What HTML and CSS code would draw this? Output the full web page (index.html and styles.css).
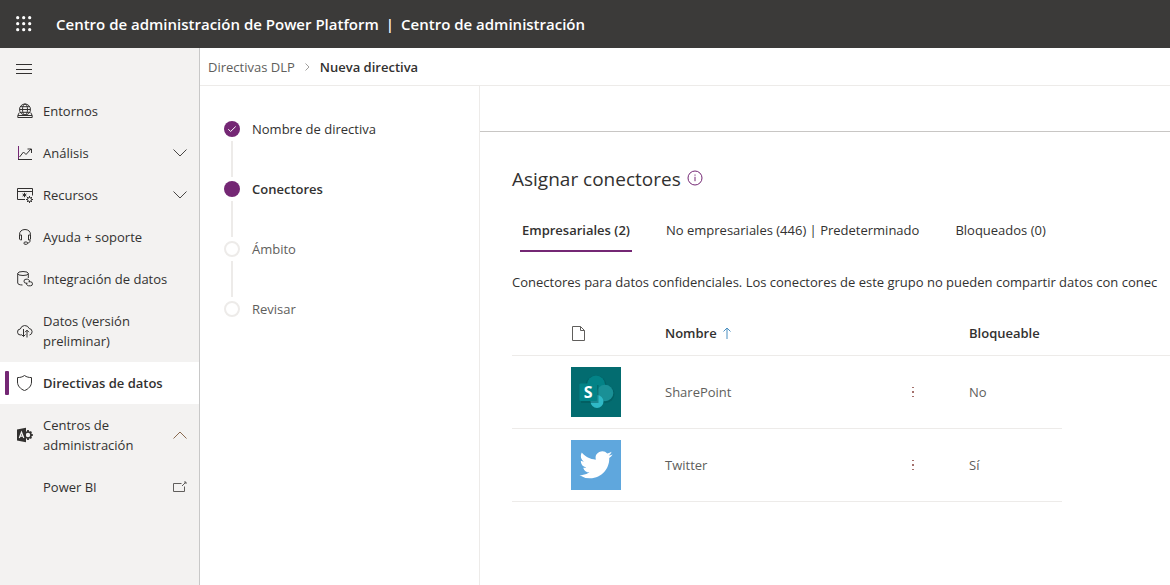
FILE: index.html
```html
<!DOCTYPE html>
<html lang="es">
<head>
<meta charset="utf-8">
<meta name="viewport" content="width=device-width, initial-scale=1">
<title>Centro de administración de Power Platform</title>
<link rel="stylesheet" href="styles.css">
</head>
<body>
<div class="app">
  <header class="topbar">
    <button class="icon-button waffle" type="button" aria-label="Iniciador de aplicaciones">
      <svg width="16" height="16" viewBox="0 0 16 16" fill="currentColor"><circle cx="1.7" cy="1.7" r="1.6"/><circle cx="7.7" cy="1.7" r="1.6"/><circle cx="13.7" cy="1.7" r="1.6"/><circle cx="1.7" cy="7.7" r="1.6"/><circle cx="7.7" cy="7.7" r="1.6"/><circle cx="13.7" cy="7.7" r="1.6"/><circle cx="1.7" cy="13.7" r="1.6"/><circle cx="7.7" cy="13.7" r="1.6"/><circle cx="13.7" cy="13.7" r="1.6"/></svg>
    </button>
    <span class="brand">Centro de administración de Power Platform</span>
    <span class="brand-divider">|</span>
    <span class="brand">Centro de administración</span>
  </header>

  <div class="body">
    <nav class="sidebar" aria-label="Principal">
      <button class="icon-button menu" type="button" aria-label="Contraer menú">
        <svg width="16" height="10" viewBox="0 0 16 10" stroke="currentColor"><path d="M0 .5h16M0 5.500h16M0 9.500h16"/></svg>
      </button>
      <a class="nav-item" href="#entornos">
        <svg class="nav-icon" viewBox="0 0 16 16"><circle cx="8" cy="6.500" r="5.500"/><ellipse cx="8" cy="6.500" rx="2.500" ry="5.500"/><path d="M2.500 6.500h11M3.400 3.700h9.200M3.400 9.300h9.200M2.300 9.500L.8 12.500v2h14.400v-2l-1.500-3M1 12.500h14"/></svg>
        <span class="nav-label">Entornos</span>
      </a>
      <a class="nav-item" href="#analisis">
        <svg class="nav-icon" viewBox="0 0 16 16"><path class="accent" d="M1.500 1v13.500"/><path d="M1 14.500H15M2.500 12l4-5 2.500 2.500 5-5.500M10.500 4H14.500v4"/></svg>
        <span class="nav-label">Análisis</span>
        <svg class="chevron" viewBox="0 0 14 8"><path d="M.5.500L7 7 13.500.5"/></svg>
      </a>
      <a class="nav-item" href="#recursos">
        <svg class="nav-icon" viewBox="0 0 16 16"><path d="M8 12.500H.5v-11h15v7M.5 4.500h15"/><path d="M7.500 5.800v4.400M5.600 6.900l3.800 2.200M9.400 6.900L5.600 9.100"/><circle cx="12.500" cy="12.500" r="2"/><path d="M12.500 9v1.500M12.500 14.500V16M9 12.500h1.500M14.500 12.500H16M10 10l1 1M14 14l1 1M15 10l-1 1M11 14l-1 1"/></svg>
        <span class="nav-label">Recursos</span>
        <svg class="chevron" viewBox="0 0 14 8"><path d="M.5.500L7 7 13.500.5"/></svg>
      </a>
      <a class="nav-item" href="#ayuda">
        <svg class="nav-icon" viewBox="0 0 16 16"><path d="M2.500 6V5.500C2.500 2.500 4.700.5 8 .5s5.500 2 5.500 5V6M2.500 6h2v5h-1l-1-1zM13.500 6h-2v5h1l1-1zM13 11v1c0 1.200-1 2-2.500 2"/><rect x="7" y="13" width="3.500" height="2.300" rx="1"/></svg>
        <span class="nav-label">Ayuda + soporte</span>
      </a>
      <a class="nav-item" href="#integracion">
        <svg class="nav-icon" viewBox="0 0 16 16"><ellipse cx="6" cy="2.500" rx="5.300" ry="2"/><path d="M.7 2.500v9.500c0 1.200 2 2 4.800 2M11.300 2.500V7"/><path d="M10.500 12.200H9a2 2 0 1 1 0-4h1.500a2 2 0 0 1 1.800 2.800M11.500 10.800h2a2 2 0 1 1 0 4h-2a2 2 0 0 1-1.800-2.700"/></svg>
        <span class="nav-label">Integración de datos</span>
      </a>
      <a class="nav-item" href="#datos">
        <svg class="nav-icon" viewBox="0 0 16 16"><path d="M4.500 12H3.700a3 3 0 0 1-.4-6A4.700 4.700 0 0 1 12.200 5.500 3.300 3.300 0 0 1 12.500 12M6.500 6v7.500M4.500 11.500l2 2 2-2M10 14.500V7.200M8 9.200l2-2 2 2"/></svg>
        <span class="nav-label">Datos (versión preliminar)</span>
      </a>
      <a class="nav-item selected" href="#directivas" aria-current="page">
        <svg class="nav-icon" viewBox="0 0 16 16"><path d="M7.500.5C5.500 2 3 2.600.5 2.600V7c0 4 3 7 7 8.600 4-1.600 7-4.600 7-8.600V2.600C12 2.600 9.500 2 7.500.5z"/></svg>
        <span class="nav-label">Directivas de datos</span>
      </a>
      <a class="nav-item" href="#centros">
        <svg class="nav-icon" viewBox="0 0 16 16"><circle cx="11" cy="8" r="3" stroke-width="1.600"/><path d="M11 3v2M11 11v2M14 8h1.800M13.100 5.900l1.300-1.300M13.100 10.100l1.300 1.300" stroke-width="1.800"/><path class="solid" d="M0 2.500L9 .8v14.400L0 13.500z"/><path class="cutout" d="M2.300 11L4.500 5.200 6.800 11M3.200 9.200h2.700"/></svg>
        <span class="nav-label">Centros de administración</span>
        <svg class="chevron open" viewBox="0 0 14 8"><path d="M.5 7.500L7 1l6.500 6.500"/></svg>
      </a>
      <a class="nav-item nested" href="#powerbi">
        <span class="nav-label">Power BI</span>
        <svg class="external" viewBox="0 0 14 12"><path d="M8.500 2.500h-8v8h11V5.500M9 5L12.800 1.200M11 1h2v2"/></svg>
      </a>
    </nav>

    <main class="main">
      <nav class="breadcrumb" aria-label="Ruta">
        <a class="crumb" href="#dlp">Directivas DLP</a>
        <svg class="crumb-arrow" viewBox="0 0 5 8"><path d="M.5.500L4 4 .5 7.500"/></svg>
        <span class="crumb-current" aria-current="page">Nueva directiva</span>
      </nav>
      <div class="workspace">
        <ol class="steps">
          <li class="step"><span class="dot done"><svg width="16" height="16" viewBox="0 0 16 16"><path d="M4.300 8.200l2.300 2.300 5.100-5"/></svg></span><span>Nombre de directiva</span></li>
          <li class="step current" aria-current="step"><span class="dot done"></span><span>Conectores</span></li>
          <li class="step pending"><span class="dot"></span><span>Ámbito</span></li>
          <li class="step pending"><span class="dot"></span><span>Revisar</span></li>
        </ol>
        <section class="panel">
          <div class="commands"></div>
          <div class="content">
            <div class="heading">
              <h1>Asignar conectores</h1>
              <button class="icon-button info" type="button" aria-label="Información">
                <svg width="16" height="16" viewBox="0 0 16 16" fill="none" stroke="currentColor"><circle cx="8" cy="8" r="7"/><path d="M8 6.800v4.400M8 4.500v1.200"/></svg>
              </button>
            </div>
            <div class="tabs" role="tablist">
              <button class="tab active" type="button" role="tab" aria-selected="true">Empresariales (2)</button>
              <button class="tab" type="button" role="tab" aria-selected="false">No empresariales (446) | Predeterminado</button>
              <button class="tab" type="button" role="tab" aria-selected="false">Bloqueados (0)</button>
            </div>
            <p class="description">Conectores para datos confidenciales. Los conectores de este grupo no pueden compartir datos con conec</p>
            <table class="connectors">
              <colgroup><col class="col-check"><col class="col-icon"><col class="col-name"><col class="col-more"><col class="col-block"><col></colgroup>
              <thead>
                <tr>
                  <th></th>
                  <th><svg class="file" viewBox="0 0 13 15"><path d="M.5.500h8l4 4v10H.500zM8.500.500v4h4"/></svg></th>
                  <th><span class="sort">Nombre <svg viewBox="0 0 8 12"><path d="M4 12V1M.5 4.500L4 1l3.500 3.500"/></svg></span></th>
                  <th></th>
                  <th>Bloqueable</th>
                  <th></th>
                </tr>
              </thead>
              <tbody>
                <tr>
                  <td></td>
                  <td>
                    <svg class="logo" viewBox="0 0 50 50">
                      <rect width="50" height="50" fill="#036c70"/>
                      <circle cx="25" cy="19" r="10.500" fill="#024f52" opacity=".35"/>
                      <circle cx="25" cy="17.500" r="9" fill="#038387"/>
                      <circle cx="34.500" cy="27" r="9" fill="#024f52" opacity=".4"/>
                      <circle cx="34" cy="26" r="8.300" fill="#1a9096"/>
                      <circle cx="26" cy="34.500" r="6.500" fill="#2fb9c6"/>
                      <path d="M10 18h17.500v18H10z" fill="#024f52" opacity=".45"/>
                      <rect x="8.500" y="16.500" width="17.500" height="17.500" rx="1" fill="#038387"/>
                      <text class="logo-letter" x="17.200" y="30.600">S</text>
                    </svg>
                  </td>
                  <td>SharePoint</td>
                  <td><button class="icon-button more" type="button" aria-label="Más acciones de SharePoint"><svg width="2" height="10" viewBox="0 0 2 10"><path d="M0 0h2v1H0zM0 4h2v2H0zM0 9h2v1H0z"/></svg></button></td>
                  <td>No</td>
                  <td></td>
                </tr>
                <tr>
                  <td></td>
                  <td>
                    <svg class="logo" viewBox="0 0 50 50">
                      <rect width="50" height="50" fill="#5fa7dd"/>
                      <path transform="translate(8.500 8.200) scale(1.380)" fill="#fff" d="M23.950 4.570a10 10 0 0 1-2.830.780 4.960 4.960 0 0 0 2.170-2.730c-.950.560-2 .960-3.130 1.190a4.920 4.920 0 0 0-8.380 4.480C7.690 8.090 4.070 6.130 1.640 3.160a4.820 4.820 0 0 0-.670 2.480c0 1.710.870 3.210 2.190 4.100a4.900 4.900 0 0 1-2.230-.620v.060a4.920 4.920 0 0 0 3.950 4.830 5 5 0 0 1-2.210.080 4.940 4.940 0 0 0 4.600 3.420A9.870 9.870 0 0 1 0 19.540a13.990 13.990 0 0 0 7.560 2.210c9.050 0 14-7.500 14-13.980 0-.210 0-.420-.020-.630a9.940 9.940 0 0 0 2.460-2.550z"/>
                    </svg>
                  </td>
                  <td>Twitter</td>
                  <td><button class="icon-button more" type="button" aria-label="Más acciones de Twitter"><svg width="2" height="10" viewBox="0 0 2 10"><path d="M0 0h2v1H0zM0 4h2v2H0zM0 9h2v1H0z"/></svg></button></td>
                  <td>Sí</td>
                  <td></td>
                </tr>
              </tbody>
            </table>
          </div>
        </section>
      </div>
    </main>
  </div>
</div>
</body>
</html>
```
FILE: styles.css
```css
* { box-sizing: border-box; }

body {
  margin: 0;
  font: 13px/20px "Open Sans", "Noto Sans", sans-serif;
  color: #323130;
  background: #fff;
}

.app {
  min-height: 100vh;
  display: flex;
  flex-direction: column;
}

.icon-button {
  display: inline-flex;
  align-items: center;
  justify-content: center;
  padding: 0;
  border: 0;
  background: none;
  color: inherit;
}

/* Top bar */
.topbar {
  display: flex;
  align-items: center;
  height: 48px;
  color: #fff;
  background: #3b3a39;
  font-size: 15px;
  font-weight: 600;
  white-space: nowrap;
}
.waffle { width: 48px; height: 48px; margin-right: 8px; }
.brand-divider { padding: 0 7px; }

.body { flex: 1; display: flex; }

/* Sidebar */
.sidebar {
  flex: 0 0 200px;
  display: flex;
  flex-direction: column;
  background: #f3f2f1;
  border-right: 1px solid #c8c8c8;
}
.menu { width: 48px; height: 42px; }
.nav-item {
  display: flex;
  align-items: center;
  min-height: 42px;
  padding: 11px 12px 11px 17px;
  color: inherit;
  text-decoration: none;
}
.nav-label { flex: 1; }
.nav-icon {
  flex: none;
  width: 16px;
  height: 16px;
  margin-right: 10px;
  fill: none;
  stroke: #323130;
}
.nav-icon .accent { stroke: #742774; }
.nav-icon .solid { fill: #323130; stroke: none; }
.nav-icon .cutout { stroke: #f3f2f1; stroke-width: 1.2; }
.chevron { flex: none; width: 14px; height: 8px; fill: none; stroke: #484644; }
.chevron.open { stroke: #8a6a50; }
.external { flex: none; width: 14px; height: 12px; fill: none; stroke: #605e5c; }
.nested { padding-left: 43px; }
.selected {
  position: relative;
  background: #fff;
  font-weight: 600;
}
.selected::before {
  content: "";
  position: absolute;
  left: 5px;
  top: 9px;
  bottom: 9px;
  width: 4px;
  border-radius: 1px;
  background: #742774;
}

/* Breadcrumb */
.main { flex: 1; min-width: 0; display: flex; flex-direction: column; }
.breadcrumb {
  display: flex;
  align-items: center;
  gap: 10px;
  height: 38px;
  padding-left: 8px;
  border-bottom: 1px solid #edebe9;
}
.crumb { color: #605e5c; text-decoration: none; }
.crumb-arrow { width: 5px; height: 8px; fill: none; stroke: #a19f9d; }
.crumb-current { font-weight: 600; }

.workspace { flex: 1; display: flex; }

/* Wizard steps */
.steps {
  flex: 0 0 280px;
  margin: 0;
  padding: 33px 24px;
  list-style: none;
  border-right: 1px solid #edebe9;
}
.step {
  position: relative;
  display: flex;
  align-items: center;
  gap: 12px;
  margin-bottom: 40px;
}
.step:not(:last-child)::after {
  content: "";
  position: absolute;
  left: 7px;
  top: 22px;
  width: 2px;
  height: 36px;
  background: #edebe9;
}
.current { font-weight: 600; }
.pending { color: #605e5c; }
.dot {
  display: flex;
  width: 16px;
  height: 16px;
  border: 2px solid #edebe9;
  border-radius: 50%;
}
.done { border: 0; background: #742774; }
.dot svg { fill: none; stroke: #fff; }

/* Connector panel */
.panel { flex: 1; min-width: 0; }
.commands { height: 46px; border-bottom: 1px solid #c8c6c4; }
.content { padding: 32px 0 0 32px; overflow: hidden; }
.heading { display: flex; align-items: flex-start; gap: 6px; }
h1 { margin: 0; font-size: 19px; font-weight: 400; line-height: 30px; }
.info { height: 28px; color: #742774; }

.tabs { display: flex; gap: 20px; padding: 14px 0 0 8px; }
.tab {
  height: 44px;
  padding: 2px 8px 0;
  border: 0;
  border-bottom: 2px solid transparent;
  background: none;
  font: inherit;
  color: inherit;
  white-space: nowrap;
}
.tab.active {
  margin-right: 6px;
  padding: 2px 2px 0;
  border-color: #742774;
  font-weight: 600;
}
.description { margin: 20px 0; white-space: nowrap; }

.connectors {
  width: 100%;
  table-layout: fixed;
  border-collapse: collapse;
}
.col-check { width: 47px; }
.col-icon { width: 94px; }
.col-name { width: 240px; }
.col-more { width: 64px; }
.col-block { width: 105px; }
.connectors th,
.connectors td {
  padding: 0 12px;
  text-align: left;
  border-bottom: 1px solid #edebe9;
}
.connectors th { height: 43px; font-weight: 600; }
.connectors td { height: 73px; color: #605e5c; }
.connectors td:last-child { border-bottom: 0; }
.file { display: block; width: 13px; height: 15px; margin-left: 1px; fill: none; stroke: #605e5c; }
.sort { display: flex; align-items: center; gap: 6px; }
.sort svg { width: 8px; height: 12px; fill: none; stroke: #4a8fc0; }
.logo { display: block; width: 50px; height: 50px; }
.logo-letter {
  font: 700 16px "Open Sans", sans-serif;
  text-anchor: middle;
  fill: #fff;
}
.more { width: 16px; height: 20px; }
.more svg { fill: #a4706c; }
```
